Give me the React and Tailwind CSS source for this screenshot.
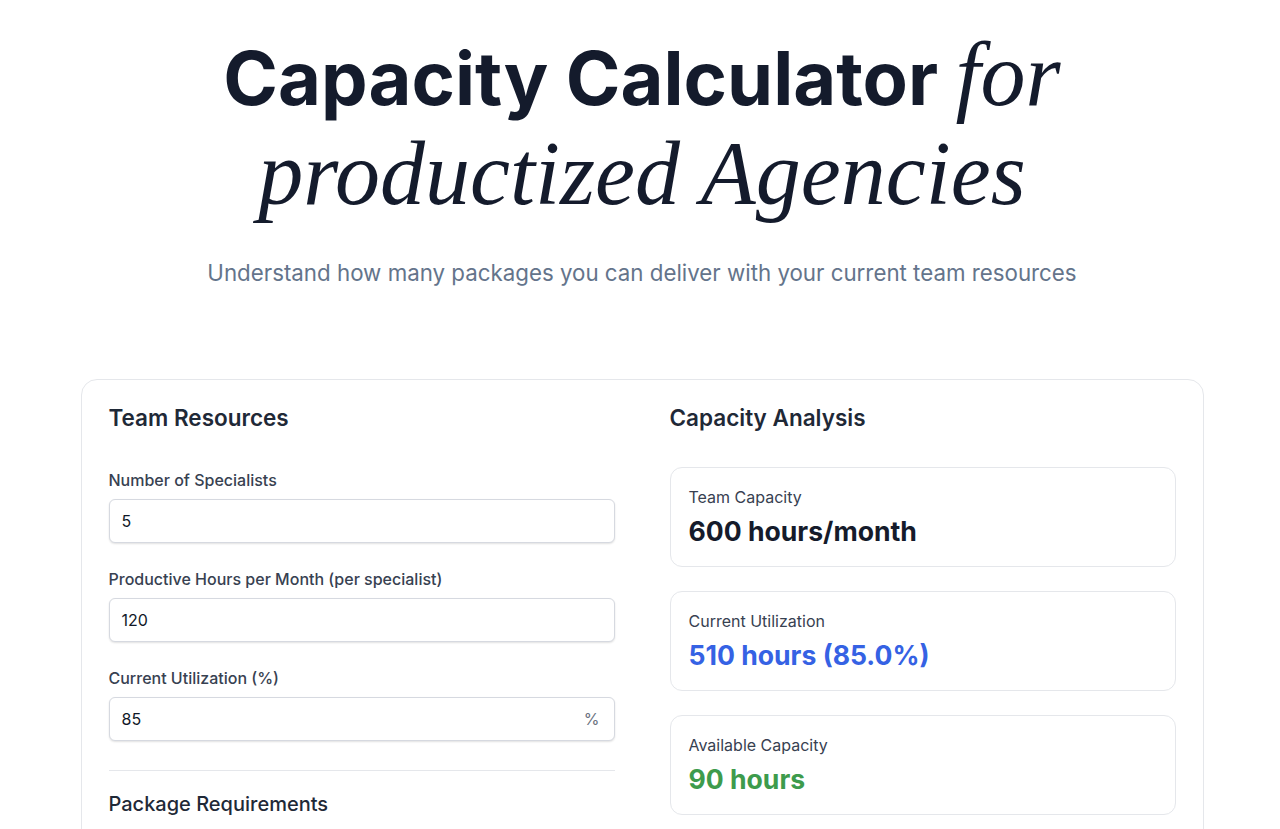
export default function App() {
  const sans = { fontFamily: 'Inter, "Noto Sans", sans-serif' };
  const serif = { fontFamily: '"Liberation Serif", "DejaVu Serif", serif' };
  return (
    <div className="min-h-screen bg-white pl-[4px] pb-20" style={sans}>
      <header className="pt-[27px] text-center">
        <h1 className="text-[74px] leading-[95px] font-bold text-[#141b2c]">
          Capacity Calculator{' '}
          <span className="font-normal italic text-[90px]" style={serif}>
            for
          </span>
          <br />
          <span className="font-normal italic text-[90px]" style={serif}>
            productized Agencies
          </span>
        </h1>
        <p className="mt-[32px] text-[22.3px] leading-[32px] text-[#64748b]">
          Understand how many packages you can deliver with your current team resources
        </p>
      </header>

      <main className="mt-[90px] mx-auto w-[1123px] rounded-2xl border border-[#e5e7eb] bg-white px-[27px] pt-6 pb-10">
        <div className="grid grid-cols-2 gap-[55px]">
          <section>
            <h2 className="text-[22.5px] leading-7 font-semibold text-[#1f2937] mb-9">Team Resources</h2>
            <div className="flex flex-col gap-6">
              <Field label="Number of Specialists" value="5" />
              <Field label="Productive Hours per Month (per specialist)" value="120" />
              <Field label="Current Utilization (%)" value="85" suffix="%" />
            </div>
            <div className="mt-[29px] border-t border-[#e5e7eb]" />
            <h3 className="mt-[19px] text-[20px] leading-7 font-medium text-[#1f2937]">Package Requirements</h3>
          </section>

          <section>
            <h2 className="text-[22.5px] leading-7 font-semibold text-[#1f2937] mb-[35px]">Capacity Analysis</h2>
            <div className="flex flex-col gap-6">
              <Stat label="Team Capacity" value="600 hours/month" color="text-[#151b2b]" />
              <Stat label="Current Utilization" value="510 hours (85.0%)" color="text-[#3562e4]" />
              <Stat label="Available Capacity" value="90 hours" color="text-[#3d9b4c]" />
            </div>
          </section>
        </div>
      </main>
    </div>
  );
}

function Field({ label, value, suffix }) {
  return (
    <div>
      <label className="block text-base leading-6 font-medium text-[#374151] mb-[7px]">{label}</label>
      <div className="relative flex h-[44px] items-center rounded-md border border-[#d6d9e0] bg-white px-3 shadow-[0_1px_2px_rgba(0,0,0,0.12)]">
        <span className="text-base text-[#111827]">{value}</span>
        {suffix && <span className="ml-auto pr-[2px] text-base text-[#6b7280]">{suffix}</span>}
      </div>
    </div>
  );
}

function Stat({ label, value, color }) {
  return (
    <div className="rounded-xl border border-[#e5e7eb] px-[18px] pt-[17px] pb-[17px]">
      <div className="text-base leading-6 text-[#374151]">{label}</div>
      <div className={`mt-1 text-[26.6px] leading-9 font-bold ${color}`}>{value}</div>
    </div>
  );
}
